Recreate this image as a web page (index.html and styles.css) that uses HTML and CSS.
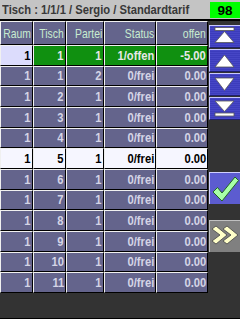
FILE: index.html
```html
<!DOCTYPE html>
<html lang="de">
<head>
  <meta charset="UTF-8">
  <meta name="viewport" content="width=device-width, initial-scale=1.0">
  <link rel="stylesheet" href="styles.css">
  <title>Tisch 1/1/1</title>
</head>
<body>

  <div class="screen">
    <div class="titlebar">
      <div class="title"><span>Tisch : 1/1/1 / Sergio / Standardtarif</span></div>
      <span class="count">98</span>
    </div>

    <div class="main">
      <div class="grid">
        <div class="cell head"><span>Raum</span></div>
        <div class="cell head"><span>Tisch</span></div>
        <div class="cell head"><span>Partei</span></div>
        <div class="cell head"><span>Status</span></div>
        <div class="cell head"><span>offen</span></div>

        <div class="cell picked"><span>1</span></div>
        <div class="cell busy"><span>1</span></div>
        <div class="cell busy"><span>1</span></div>
        <div class="cell busy"><span>1/offen</span></div>
        <div class="cell busy"><span>-5.00</span></div>

        <div class="cell"><span>1</span></div><div class="cell"><span>1</span></div><div class="cell"><span>2</span></div><div class="cell"><span>0/frei</span></div><div class="cell"><span>0.00</span></div>
        <div class="cell"><span>1</span></div><div class="cell"><span>2</span></div><div class="cell"><span>1</span></div><div class="cell"><span>0/frei</span></div><div class="cell"><span>0.00</span></div>
        <div class="cell"><span>1</span></div><div class="cell"><span>3</span></div><div class="cell"><span>1</span></div><div class="cell"><span>0/frei</span></div><div class="cell"><span>0.00</span></div>
        <div class="cell"><span>1</span></div><div class="cell"><span>4</span></div><div class="cell"><span>1</span></div><div class="cell"><span>0/frei</span></div><div class="cell"><span>0.00</span></div>

        <div class="cell current"><span>1</span></div>
        <div class="cell current"><span>5</span></div>
        <div class="cell current"><span>1</span></div>
        <div class="cell current"><span>0/frei</span></div>
        <div class="cell current"><span>0.00</span></div>

        <div class="cell"><span>1</span></div><div class="cell"><span>6</span></div><div class="cell"><span>1</span></div><div class="cell"><span>0/frei</span></div><div class="cell"><span>0.00</span></div>
        <div class="cell"><span>1</span></div><div class="cell"><span>7</span></div><div class="cell"><span>1</span></div><div class="cell"><span>0/frei</span></div><div class="cell"><span>0.00</span></div>
        <div class="cell"><span>1</span></div><div class="cell"><span>8</span></div><div class="cell"><span>1</span></div><div class="cell"><span>0/frei</span></div><div class="cell"><span>0.00</span></div>
        <div class="cell"><span>1</span></div><div class="cell"><span>9</span></div><div class="cell"><span>1</span></div><div class="cell"><span>0/frei</span></div><div class="cell"><span>0.00</span></div>
        <div class="cell"><span>1</span></div><div class="cell"><span>10</span></div><div class="cell"><span>1</span></div><div class="cell"><span>0/frei</span></div><div class="cell"><span>0.00</span></div>
        <div class="cell"><span>1</span></div><div class="cell"><span>11</span></div><div class="cell"><span>1</span></div><div class="cell"><span>0/frei</span></div><div class="cell"><span>0.00</span></div>
      </div>

      <div class="side">
        <div class="nav">
          <button class="btn blue" title="Anfang">
            <svg viewBox="0 0 31 23" width="31" height="23">
              <rect x="6" y="2.5" width="19" height="3" fill="#fff" stroke="#555" stroke-width="0.8"/>
              <polygon points="15.5,6.5 25,17.5 6,17.5" fill="#fff" stroke="#555" stroke-width="0.8"/>
            </svg>
          </button>
          <button class="btn blue" title="Hoch">
            <svg viewBox="0 0 31 23" width="31" height="23">
              <polygon points="15.5,6 25,18 6,18" fill="#fff" stroke="#555" stroke-width="0.8"/>
            </svg>
          </button>
          <button class="btn blue" title="Runter">
            <svg viewBox="0 0 31 23" width="31" height="23">
              <polygon points="6,5 25,5 15.5,17.5" fill="#fff" stroke="#555" stroke-width="0.8"/>
            </svg>
          </button>
          <button class="btn blue" title="Ende">
            <svg viewBox="0 0 31 23" width="31" height="23">
              <polygon points="6,4 25,4 15.5,14.5" fill="#fff" stroke="#555" stroke-width="0.8"/>
              <rect x="6" y="16" width="19" height="3" fill="#fff" stroke="#555" stroke-width="0.8"/>
            </svg>
          </button>
        </div>

        <button class="btn ok" title="OK">
          <svg viewBox="0 0 31 31" width="31" height="31">
            <path d="M3 19 L7.5 14.5 L12 20 L25 4 L28.5 7.5 L12 28 Z" fill="#a8ffa8" stroke="#226622" stroke-width="1"/>
          </svg>
        </button>

        <button class="btn next" title="Weiter">
          <svg viewBox="0 0 31 31" width="31" height="31">
            <path d="M2 8 L6 5 L17 14 L6 23 L2 20 L10 14 Z" fill="#ffffc8" stroke="#444" stroke-width="0.8"/>
            <path d="M13 8 L17 5 L28 14 L17 23 L13 20 L21 14 Z" fill="#ffffc8" stroke="#444" stroke-width="0.8"/>
          </svg>
        </button>
      </div>
    </div>
  </div>

</body>
</html>
```

FILE: styles.css
```css
body {
  margin: 0;
  background: #333;
  font-family: 'Liberation Sans', Arial, sans-serif;
  font-size: 13.5px;
}

.screen {
  width: 240px;
  height: 319px;
  box-sizing: border-box;
  border-bottom: 1px solid #000;
  background: #333;
}

/* the original font is a narrow Arial: squeeze the glyphs */
.title span,
.cell span {
  display: inline-block;
  white-space: nowrap;
  transform: scaleX(0.83);
}

.titlebar {
  height: 19px;
  background: #c4c4c4;
  border-bottom: 2px solid #000;
  display: flex;
  align-items: center;
}

.title {
  flex: 1;
  min-width: 0;
  font-weight: bold;
  color: #383838;
  padding-left: 2px;
}

.title span {
  transform-origin: left center;
}

.count {
  width: 30px;
  height: 16px;
  margin-top: 1px;
  background: #00ff00;
  color: #000;
  font-weight: bold;
  display: flex;
  align-items: center;
  justify-content: center;
}

.main {
  display: flex;
}

.grid {
  width: 208px;
  height: 272px;
  display: grid;
  grid-template-columns: 33px 33px 38px 52px 52px;
  grid-template-rows: 24px repeat(12, 1fr);
}

.cell {
  background: #64648c;
  color: #d4d4e6;
  font-weight: bold;
  border-top: 1px solid #f0f0f0;
  border-left: 1px solid #f0f0f0;
  border-right: 1px solid #000;
  border-bottom: 1px solid #000;
  display: flex;
  align-items: center;
  justify-content: flex-end;
  padding-right: 1px;
  overflow: hidden;
}

.cell span {
  transform-origin: right center;
}

.cell.head {
  font-weight: normal;
  color: #c8ecd0;
}

.cell.head span {
  transform: scaleX(0.77);
}

.cell.busy {
  background: #109010;
  color: #e8e8e8;
}

.cell.picked {
  background: #dcdcfc;
  color: #000;
}

.cell.current {
  background: #f6f6ff;
  color: #000;
}

.side {
  width: 32px;
  display: flex;
  flex-direction: column;
  align-items: flex-end;
  padding-top: 4px;
}

.nav {
  display: flex;
  flex-direction: column;
  gap: 1px;
}

.btn {
  width: 31px;
  padding: 0;
  border: none;
  display: block;
  box-sizing: border-box;
}

.btn svg {
  display: block;
}

.blue {
  height: 23px;
  background: repeating-linear-gradient(#4646c6 0 1px, #3c3cbc 1px 2px);
  border-top: 1px solid #c8c8ff;
  border-left: 1px solid #c8c8ff;
  border-bottom: 1px solid #20206a;
}

.blue svg {
  margin: -1px 0 0 -1px;
}

.ok {
  height: 32px;
  margin-top: 52px;
  background: #5c5cd0;
  border-top: 1px solid #d0d0ff;
  border-left: 1px solid #d0d0ff;
}

.next {
  height: 32px;
  margin-top: 16px;
  background: #808080;
  border-top: 1px solid #c0c0c0;
  border-left: 1px solid #c0c0c0;
}
```
